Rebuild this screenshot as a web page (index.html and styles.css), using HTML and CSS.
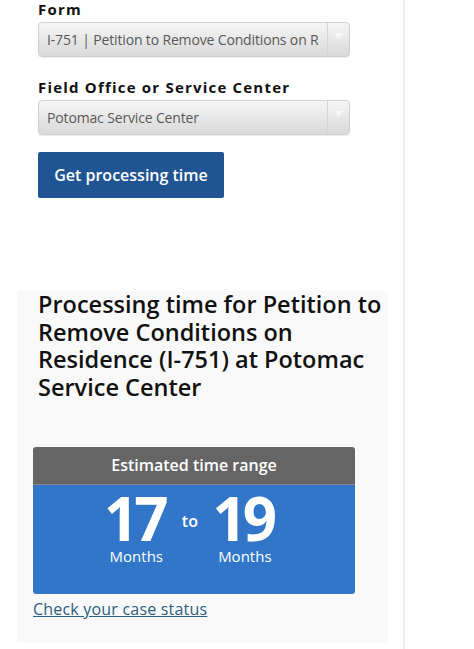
FILE: index.html
```html
<!DOCTYPE html>
<html lang="en">
<head>
<meta charset="utf-8">
<title>Processing time</title>
<link rel="stylesheet" href="styles.css">
</head>
<body>
<div class="page">
  <div class="content">
    <div class="form">
      <div class="label">Form</div>
      <div class="select">
        <span class="select-text">I-751 | Petition to Remove Conditions on R</span>
        <span class="select-arrow"><svg width="9" height="6" viewBox="0 0 9 6"><path d="M0 0H9L4.5 6Z" fill="#f7f7f7"/></svg></span>
      </div>
      <div class="label label2">Field Office or Service Center</div>
      <div class="select">
        <span class="select-text">Potomac Service Center</span>
        <span class="select-arrow"><svg width="9" height="6" viewBox="0 0 9 6"><path d="M0 0H9L4.5 6Z" fill="#f7f7f7"/></svg></span>
      </div>
      <button class="btn">Get processing time</button>
    </div>
    <div class="panel">
      <h2 class="title">Processing time for Petition to Remove Conditions on Residence (I-751) at Potomac Service Center</h2>
      <div class="range">
        <div class="range-head">Estimated time range</div>
        <div class="range-body">
          <div class="num-col"><span class="num">17</span><span class="unit">Months</span></div>
          <span class="to">to</span>
          <div class="num-col"><span class="num">19</span><span class="unit">Months</span></div>
        </div>
      </div>
      <a class="link" href="#">Check your case status</a>
    </div>
  </div>
</div>
</body>
</html>
```

FILE: styles.css
```css
html, body {
  margin: 0;
  padding: 0;
  background: #ffffff;
}
body {
  font-family: "Open Sans", "Lato", sans-serif;
  color: #111;
}
.page {
  display: flex;
  height: 649px;
  overflow: hidden;
}
.content {
  width: 403px;
  border-right: 2px solid #ededed;
  flex: none;
}
.form {
  padding-left: 38px;
}
.label {
  font-size: 15px;
  font-weight: 700;
  letter-spacing: 1.2px;
  line-height: 18px;
  color: #111;
}
.label2 {
  margin-top: 21px;
}
.select {
  margin-top: 4px;
  width: 312px;
  height: 35px;
  box-sizing: border-box;
  border: 1px solid #d0d0d0;
  border-radius: 4px;
  background: linear-gradient(#f6f6f6, #d9d9d9);
  display: flex;
  align-items: center;
  box-shadow: 0 1px 1px rgba(0,0,0,0.08);
}
.select-text {
  flex: 1;
  min-width: 0;
  padding-left: 8px;
  font-size: 14px;
  letter-spacing: -0.15px;
  color: #585858;
  white-space: nowrap;
  overflow: hidden;
}
.select-arrow {
  width: 22px;
  flex: none;
  height: 100%;
  border-left: 1px solid #d4d4d4;
  display: flex;
  align-items: center;
  justify-content: center;
  padding-bottom: 8px;
  box-sizing: border-box;
}
.btn {
  margin-top: 17px;
  display: block;
  width: 186px;
  height: 46px;
  border: none;
  border-radius: 2px;
  background: #205493;
  color: #fff;
  font-family: inherit;
  font-size: 16px;
  font-weight: 600;
  padding: 0;
}
.panel {
  margin-top: 93px;
  margin-left: 17px;
  width: 371px;
  height: 352px;
  background: #f9f9f9;
  box-sizing: border-box;
}
.title {
  margin: 0 0 0 21px;
  font-size: 23.5px;
  font-weight: 600;
  line-height: 27.5px;
  color: #111;
}
.range {
  margin: 46px 0 0 16px;
  width: 322px;
  border-radius: 3px;
  overflow: hidden;
}
.range-head {
  background: #656565;
  color: #fff;
  height: 37px;
  line-height: 37px;
  text-align: center;
  font-size: 16px;
  font-weight: 600;
  border-bottom: 1px solid #8a8a8a;
}
.range-body {
  background: #3176c8;
  height: 109px;
  display: flex;
  justify-content: flex-start;
  align-items: flex-start;
  padding: 9px 0 0 71px;
  box-sizing: border-box;
  color: #fff;
}
.num-col {
  display: flex;
  flex-direction: column;
  align-items: center;
}
.num {
  font-size: 60px;
  font-weight: 700;
  line-height: 48px;
  letter-spacing: -4px;
  padding-right: 4px;
}
.unit {
  font-size: 15px;
  line-height: 16px;
  margin-top: 6px;
}
.to {
  font-size: 16px;
  font-weight: 600;
  letter-spacing: 0.4px;
  line-height: 18px;
  margin: 18px 14px 0 13px;
}
.link {
  display: inline-block;
  margin: 4px 0 0 16px;
  font-size: 16px;
  letter-spacing: 0.2px;
  color: #2c5d80;
  text-decoration: underline;
}
```
